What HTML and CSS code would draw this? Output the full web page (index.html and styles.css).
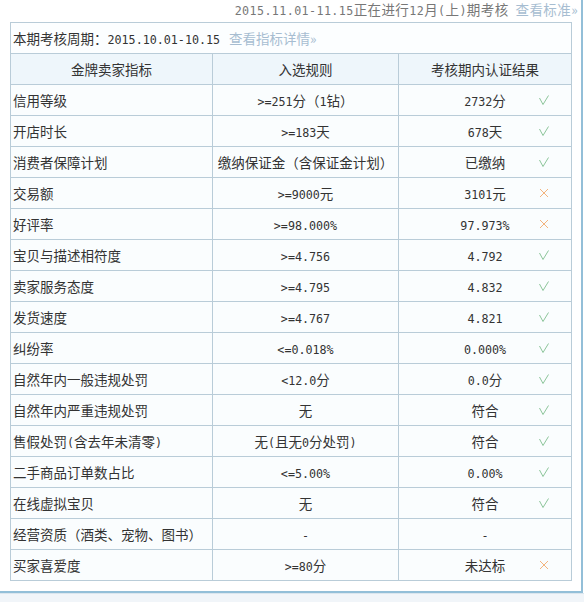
FILE: index.html
```html
<!DOCTYPE html>
<html lang="zh-CN">
<head>
<meta charset="utf-8">
<title>金牌卖家考核</title>
<link rel="stylesheet" href="styles.css">
</head>
<body>
<div class="panel">
  <div class="current"><span class="n">2015.11.01-11.15</span>正在进行<span class="n">12</span>月<span class="n">(</span>上<span class="n">)</span>期考核<a class="link" href="#">查看标准»</a></div>
  <table class="grid">
    <colgroup><col class="c1"><col class="c2"><col class="c3"></colgroup>
    <tr class="period"><td colspan="3">本期考核周期：<span class="n">2015.10.01-10.15</span><a class="link" href="#">查看指标详情»</a></td></tr>
    <tr class="head"><th>金牌卖家指标</th><th>入选规则</th><th>考核期内认证结果</th></tr>
    <tr><td class="name">信用等级</td><td class="rule"><span class="n">&gt;=251</span>分（<span class="n">1</span>钻）</td><td><div class="res"><span class="val"><span class="n">2732</span>分</span><svg class="ico" viewBox="0 0 10 10"><polyline class="ok" points="0.5,3 4,9.5 9.5,0.5"/></svg></div></td></tr>
    <tr><td class="name">开店时长</td><td class="rule"><span class="n">&gt;=183</span>天</td><td><div class="res"><span class="val"><span class="n">678</span>天</span><svg class="ico" viewBox="0 0 10 10"><polyline class="ok" points="0.5,3 4,9.5 9.5,0.5"/></svg></div></td></tr>
    <tr><td class="name">消费者保障计划</td><td class="rule">缴纳保证金（含保证金计划）</td><td><div class="res"><span class="val">已缴纳</span><svg class="ico" viewBox="0 0 10 10"><polyline class="ok" points="0.5,3 4,9.5 9.5,0.5"/></svg></div></td></tr>
    <tr><td class="name">交易额</td><td class="rule"><span class="n">&gt;=9000</span>元</td><td><div class="res"><span class="val"><span class="n">3101</span>元</span><svg class="ico" viewBox="0 0 10 10"><path class="no" d="M1 1L9 9M9 1L1 9"/></svg></div></td></tr>
    <tr><td class="name">好评率</td><td class="rule"><span class="n">&gt;=98.000%</span></td><td><div class="res"><span class="val"><span class="n">97.973%</span></span><svg class="ico" viewBox="0 0 10 10"><path class="no" d="M1 1L9 9M9 1L1 9"/></svg></div></td></tr>
    <tr><td class="name">宝贝与描述相符度</td><td class="rule"><span class="n">&gt;=4.756</span></td><td><div class="res"><span class="val"><span class="n">4.792</span></span><svg class="ico" viewBox="0 0 10 10"><polyline class="ok" points="0.5,3 4,9.5 9.5,0.5"/></svg></div></td></tr>
    <tr><td class="name">卖家服务态度</td><td class="rule"><span class="n">&gt;=4.795</span></td><td><div class="res"><span class="val"><span class="n">4.832</span></span><svg class="ico" viewBox="0 0 10 10"><polyline class="ok" points="0.5,3 4,9.5 9.5,0.5"/></svg></div></td></tr>
    <tr><td class="name">发货速度</td><td class="rule"><span class="n">&gt;=4.767</span></td><td><div class="res"><span class="val"><span class="n">4.821</span></span><svg class="ico" viewBox="0 0 10 10"><polyline class="ok" points="0.5,3 4,9.5 9.5,0.5"/></svg></div></td></tr>
    <tr><td class="name">纠纷率</td><td class="rule"><span class="n">&lt;=0.018%</span></td><td><div class="res"><span class="val"><span class="n">0.000%</span></span><svg class="ico" viewBox="0 0 10 10"><polyline class="ok" points="0.5,3 4,9.5 9.5,0.5"/></svg></div></td></tr>
    <tr><td class="name">自然年内一般违规处罚</td><td class="rule"><span class="n">&lt;12.0</span>分</td><td><div class="res"><span class="val"><span class="n">0.0</span>分</span><svg class="ico" viewBox="0 0 10 10"><polyline class="ok" points="0.5,3 4,9.5 9.5,0.5"/></svg></div></td></tr>
    <tr><td class="name">自然年内严重违规处罚</td><td class="rule">无</td><td><div class="res"><span class="val">符合</span><svg class="ico" viewBox="0 0 10 10"><polyline class="ok" points="0.5,3 4,9.5 9.5,0.5"/></svg></div></td></tr>
    <tr><td class="name">售假处罚<span class="n">(</span>含去年未清零<span class="n">)</span></td><td class="rule">无<span class="n">(</span>且无<span class="n">0</span>分处罚<span class="n">)</span></td><td><div class="res"><span class="val">符合</span><svg class="ico" viewBox="0 0 10 10"><polyline class="ok" points="0.5,3 4,9.5 9.5,0.5"/></svg></div></td></tr>
    <tr><td class="name">二手商品订单数占比</td><td class="rule"><span class="n">&lt;=5.00%</span></td><td><div class="res"><span class="val"><span class="n">0.00%</span></span><svg class="ico" viewBox="0 0 10 10"><polyline class="ok" points="0.5,3 4,9.5 9.5,0.5"/></svg></div></td></tr>
    <tr><td class="name">在线虚拟宝贝</td><td class="rule">无</td><td><div class="res"><span class="val">符合</span><svg class="ico" viewBox="0 0 10 10"><polyline class="ok" points="0.5,3 4,9.5 9.5,0.5"/></svg></div></td></tr>
    <tr><td class="name">经营资质（酒类、宠物、图书）</td><td class="rule"><span class="n">-</span></td><td><div class="res"><span class="val"><span class="n">-</span></span></div></td></tr>
    <tr><td class="name">买家喜爱度</td><td class="rule"><span class="n">&gt;=80</span>分</td><td><div class="res"><span class="val">未达标</span><svg class="ico" viewBox="0 0 10 10"><path class="no" d="M1 1L9 9M9 1L1 9"/></svg></div></td></tr>
  </table>
</div>
<div class="below"></div>
</body>
</html>
```
FILE: styles.css
```css
html, body {
  margin: 0;
  padding: 0;
  background: #ffffff;
}
body {
  font-family: "Noto Sans CJK SC", "Liberation Sans", sans-serif;
  font-size: 13.5px;
  color: #333333;
  width: 584px;
  height: 602px;
  overflow: hidden;
}
.n {
  font-family: "DejaVu Sans Mono", "Liberation Mono", monospace;
  font-size: 11.7px;
}
.panel {
  box-sizing: border-box;
  width: 583px;
  height: 593px;
  padding-left: 10px;
  border-right: 2px solid #93bfd8;
  border-bottom: 2px solid #93bfd8;
}
.current {
  height: 22px;
  line-height: 18px;
  text-align: right;
  padding-right: 3px;
  color: #777777;
  white-space: nowrap;
  letter-spacing: 0.4px;
}
.link {
  color: #a7bdd1;
  text-decoration: none;
  margin-left: 7px;
}
.period .link {
  margin-left: 9px;
}
.grid {
  border-collapse: collapse;
  table-layout: fixed;
  width: 561px;
}
.c1 { width: 202px; }
.c2 { width: 186px; }
.c3 { width: 173px; }
.grid td, .grid th {
  border: 1px solid #b9ccd8;
  height: 30px;
  padding: 0;
  font-weight: normal;
  white-space: nowrap;
  background: #fafdfe;
}
.period td {
  background: #fcfeff;
  padding-left: 2px;
  text-align: left;
}
.head th {
  background: #eef6fb;
  text-align: center;
}
.grid td.name {
  text-align: left;
  padding-left: 2px;
}
.rule {
  text-align: center;
}
.res {
  display: grid;
  grid-template-columns: 1fr auto 1fr;
  align-items: center;
}
.res .val {
  grid-column: 2;
}
.ico {
  grid-column: 3;
  justify-self: end;
  width: 10px;
  height: 10px;
  margin-right: 22px;
  overflow: visible;
}
.ok {
  fill: none;
  stroke: #8cc59a;
  stroke-width: 1;
}
.no {
  fill: none;
  stroke: #f3b47e;
  stroke-width: 1;
}
.below {
  height: 9px;
  border-top: 1px solid #dbe6ee;
  background: #f1f5f9;
}
```
